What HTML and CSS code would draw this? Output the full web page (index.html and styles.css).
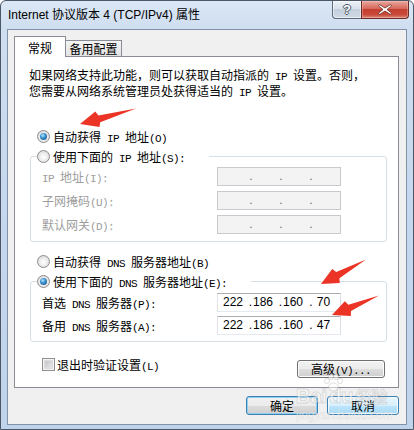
FILE: index.html
```html
<!DOCTYPE html>
<html lang="zh-CN">
<head>
    <meta charset="UTF-8">
    <meta name="viewport" content="width=device-width, initial-scale=1.0">
    <title>Internet 协议版本 4 (TCP/IPv4) 属性</title>
    <link rel="stylesheet" href="styles.css">
</head>
<body>
    <div class="window">
        <div class="titlebar">
            <div class="title">Internet 协议版本 4 (TCP/IPv4) 属性</div>
            <div class="caption-btns">
                <div class="cbtn help">?</div>
                <div class="cbtn close">
                    <svg width="14" height="11" viewBox="0 0 14 11">
                        <path d="M1.5 0.5 L7 4 L12.5 0.5 L13.5 2 L9 5.5 L13.5 9 L12.5 10.5 L7 7 L1.5 10.5 L0.5 9 L5 5.5 L0.5 2 Z" fill="#fff" stroke="#6b2a22" stroke-width="0.8"/>
                    </svg>
                </div>
            </div>
        </div>

        <div class="client">
            <div class="tabs">
                <div class="tab active">常规</div>
                <div class="tab">备用配置</div>
            </div>

            <div class="panel">
                <p class="desc">如果网络支持此功能，则可以获取自动指派的<span class="en"> IP </span>设置。否则，<br>您需要从网络系统管理员处获得适当的<span class="en"> IP </span>设置。</p>

                <div class="opt first">
                    <span class="radio on"></span>
                    <span>自动获得<span class="en"> IP </span>地址<span class="en">(O)</span></span>
                </div>

                <fieldset class="group">
                    <legend>
                        <span class="opt">
                            <span class="radio"></span>
                            <span>使用下面的<span class="en"> IP </span>地址<span class="en">(S):</span></span>
                        </span>
                    </legend>
                    <div class="rows">
                        <div class="field-row disabled">
                            <span><span class="en">IP </span>地址<span class="en">(I):</span></span>
                            <div class="ip off">
                                <span class="cell"><span class="num"></span></span>
                                <span class="cell"><span class="dot">.</span><span class="num"></span></span>
                                <span class="cell"><span class="dot">.</span><span class="num"></span></span>
                                <span class="cell"><span class="dot">.</span><span class="num"></span></span>
                            </div>
                        </div>
                        <div class="field-row disabled">
                            <span>子网掩码<span class="en">(U):</span></span>
                            <div class="ip off">
                                <span class="cell"><span class="num"></span></span>
                                <span class="cell"><span class="dot">.</span><span class="num"></span></span>
                                <span class="cell"><span class="dot">.</span><span class="num"></span></span>
                                <span class="cell"><span class="dot">.</span><span class="num"></span></span>
                            </div>
                        </div>
                        <div class="field-row disabled">
                            <span>默认网关<span class="en">(D):</span></span>
                            <div class="ip off">
                                <span class="cell"><span class="num"></span></span>
                                <span class="cell"><span class="dot">.</span><span class="num"></span></span>
                                <span class="cell"><span class="dot">.</span><span class="num"></span></span>
                                <span class="cell"><span class="dot">.</span><span class="num"></span></span>
                            </div>
                        </div>
                    </div>
                </fieldset>

                <div class="opt dns-auto">
                    <span class="radio"></span>
                    <span>自动获得<span class="en"> DNS </span>服务器地址<span class="en">(B)</span></span>
                </div>

                <fieldset class="group dns">
                    <legend>
                        <span class="opt">
                            <span class="radio on"></span>
                            <span>使用下面的<span class="en"> DNS </span>服务器地址<span class="en">(E):</span></span>
                        </span>
                    </legend>
                    <div class="rows">
                        <div class="field-row">
                            <span>首选<span class="en"> DNS </span>服务器<span class="en">(P):</span></span>
                            <div class="ip">
                                <span class="cell"><span class="num">222</span></span>
                                <span class="cell"><span class="dot">.</span><span class="num">186</span></span>
                                <span class="cell"><span class="dot">.</span><span class="num">160</span></span>
                                <span class="cell"><span class="dot">.</span><span class="num">70</span></span>
                            </div>
                        </div>
                        <div class="field-row">
                            <span>备用<span class="en"> DNS </span>服务器<span class="en">(A):</span></span>
                            <div class="ip">
                                <span class="cell"><span class="num">222</span></span>
                                <span class="cell"><span class="dot">.</span><span class="num">186</span></span>
                                <span class="cell"><span class="dot">.</span><span class="num">160</span></span>
                                <span class="cell"><span class="dot">.</span><span class="num">47</span></span>
                            </div>
                        </div>
                    </div>
                </fieldset>

                <div class="bottom-row">
                    <label class="checkline">
                        <span class="check"></span>
                        <span>退出时验证设置<span class="en">(L)</span></span>
                    </label>
                    <button class="btn advanced">高级<span class="en">(V)...</span></button>
                </div>
            </div>

            <div class="dialog-btns">
                <button class="btn ok">确定</button>
                <button class="btn cancel">取消</button>
            </div>
        </div>
    </div>

    <svg class="arrows" width="414" height="430" viewBox="0 0 414 430">
        <polygon points="80,124 95.3,111.6 98.4,115.4 136,108.5 100.2,122.2 99.5,127" fill="#ec3426"/>
        <polygon points="321,284 332.2,268.9 336.2,272 366,259.5 339.4,278.2 339.8,283.1" fill="#ec3426"/>
        <polygon points="332,315 344.8,301.2 348.4,304.7 379,295.5 351,311.1 350.8,316" fill="#ec3426"/>
    </svg>

    <div class="watermark">
        <div class="wm-logo">
            <span>Bai</span>
            <svg width="20" height="18" viewBox="0 0 20 18">
                <circle cx="4" cy="7" r="2.5"/>
                <circle cx="8" cy="3" r="2.5"/>
                <circle cx="13" cy="3" r="2.5"/>
                <circle cx="17" cy="7" r="2.5"/>
                <ellipse cx="10.5" cy="13" rx="5" ry="4"/>
            </svg>
            <span>du</span>
            <span class="wm-cn">经验</span>
        </div>
        <div class="wm-url">jingyan.baidu.com</div>
    </div>
</body>
</html>
```

FILE: styles.css
```css
body {
    margin: 0;
    background-color: #fff;
    font-family: "Noto Sans CJK SC", sans-serif;
    font-size: 12px;
    color: #000;
}
.en {
    font-family: "Liberation Mono", "Noto Sans CJK SC", monospace;
    font-size: 11px;
    letter-spacing: -0.6px;
}
.window {
    width: 414px;
    height: 430px;
    box-sizing: border-box;
    border: 1px solid #4b5666;
    border-radius: 6px 6px 0 0;
    padding: 0 6px 4px 6px;
    background: linear-gradient(180deg, #dbe7f5 0px, #cfdef0 28px, #c6d8ee 200px, #bfd3eb 100%);
    display: flex;
    flex-direction: column;
}
.titlebar {
    height: 28px;
    display: flex;
    justify-content: space-between;
    align-items: flex-start;
    margin: 0 -6px;
    padding-left: 7px;
}
.title {
    font-family: "Liberation Sans", "Noto Sans CJK SC", sans-serif;
    font-size: 12px;
    line-height: 15px;
    margin-top: 7px;
}
.caption-btns {
    display: flex;
    margin-right: 4px;
}
.cbtn {
    height: 18px;
    box-sizing: border-box;
    display: flex;
    align-items: center;
    justify-content: center;
}
.help {
    width: 29px;
    border: 1px solid #5f6c7d;
    border-top: none;
    border-right: none;
    border-radius: 0 0 0 4px;
    background: linear-gradient(180deg, #edf2f8 0%, #d9e1ec 45%, #c4cfdd 50%, #cfd9e6 100%);
    box-shadow: inset 0 0 0 1px rgba(255, 255, 255, 0.5);
    font-family: "Liberation Sans", sans-serif;
    font-weight: bold;
    font-size: 13px;
    color: #fff;
    text-shadow: 1px 0 #4a5564, -1px 0 #4a5564, 0 1px #4a5564, 0 -1px #4a5564;
}
.close {
    width: 48px;
    border: 1px solid #6a2b24;
    border-top: none;
    border-radius: 0 0 4px 0;
    background: linear-gradient(180deg, #e8a79d 0%, #d6685b 45%, #c43f2f 50%, #c84a39 80%, #dc8b7c 100%);
    box-shadow: inset 0 0 0 1px rgba(255, 220, 210, 0.35);
}
.client {
    height: 396px;
    box-sizing: border-box;
    border: 1px solid #8192a8;
    background-color: #f0f0f0;
    padding: 6px 7px 0 6px;
}
.tabs {
    height: 20px;
    display: flex;
    align-items: flex-end;
}
.tab {
    box-sizing: border-box;
    border: 1px solid #898c95;
    border-bottom: none;
    text-align: center;
}
.tab.active {
    position: relative;
    z-index: 1;
    width: 52px;
    height: 21px;
    margin-bottom: -1px;
    background-color: #fff;
    padding-top: 3px;
    line-height: 16px;
}
.tab:not(.active) {
    width: 56px;
    height: 16px;
    border-left: none;
    background: linear-gradient(180deg, #f4f4f4, #e3e3e3);
    line-height: 15px;
}
.panel {
    height: 332px;
    box-sizing: border-box;
    border: 1px solid #898c95;
    background-color: #fff;
}
.desc {
    margin: 11px 0 0 14px;
    line-height: 14px;
    white-space: nowrap;
}
.opt {
    display: flex;
    align-items: center;
    gap: 3px;
    height: 20px;
    white-space: nowrap;
}
.opt.first {
    margin: 26px 0 0 22px;
}
.opt.dns-auto {
    margin: 9px 0 0 22px;
}
.radio {
    width: 13px;
    height: 13px;
    box-sizing: border-box;
    border-radius: 50%;
    border: 1px solid #8d8d8d;
    background: radial-gradient(circle at 50% 55%, #ffffff 0, #f2f2f2 35%, #cfcfcf 100%);
    display: flex;
    align-items: center;
    justify-content: center;
    flex: none;
}
.radio.on::after {
    content: "";
    width: 7px;
    height: 7px;
    border-radius: 50%;
    background: radial-gradient(circle at 40% 35%, #b4e6ff 0, #3b93cf 40%, #0d4675 100%);
}
.group {
    margin: 0 11px 0 15px;
    padding: 0 0 7px 6px;
    border: 1px solid #d5dfe5;
    border-radius: 3px;
    min-width: 0;
}
.group legend {
    padding: 0 24px 0 0;
}
.group .rows {
    margin: 1px 0 0 5px;
    display: flex;
    flex-direction: column;
    gap: 5px;
}
.group.dns {
    padding-bottom: 6px;
}
.group.dns .rows {
    margin-top: 2px;
    gap: 4px;
}
.field-row {
    display: grid;
    grid-template-columns: 175px 124px;
    align-items: center;
    height: 19px;
    white-space: nowrap;
}
.field-row.disabled {
    color: #9d9d9d;
}
.ip {
    height: 19px;
    box-sizing: border-box;
    border: 1px solid;
    border-color: #abadb3 #dbdfe6 #e3e9ef #e2e3ea;
    background-color: #fff;
    display: flex;
    font-family: "Liberation Sans", sans-serif;
    font-size: 12px;
    line-height: 17px;
    color: #000;
}
.ip.off {
    border-color: #c8cacd;
    background-color: #f3f3f3;
    color: #6d6d6d;
}
.cell {
    width: 30px;
    display: flex;
}
.dot {
    width: 6px;
    text-align: center;
}
.num {
    flex: 1;
    text-align: center;
    padding-right: 5px;
}
.cell:first-child .num {
    padding-right: 0;
}
.bottom-row {
    margin: 18px 13px 0 27px;
    height: 18px;
    display: flex;
    justify-content: space-between;
    align-items: flex-start;
}
.checkline {
    display: flex;
    align-items: center;
    gap: 2px;
    height: 13px;
    margin-top: -2px;
    white-space: nowrap;
}
.check {
    width: 13px;
    height: 13px;
    box-sizing: border-box;
    border: 1px solid #8e8f8f;
    background: linear-gradient(135deg, #b9bcc0, #f1f1f1);
    box-shadow: inset 0 0 0 1px #f4f4f4, inset 0 0 0 2px #dcdcdc;
}
.btn {
    box-sizing: border-box;
    border: 1px solid #707070;
    border-radius: 3px;
    background: linear-gradient(180deg, #f2f2f2 0%, #ebebeb 50%, #dddddd 51%, #cfcfcf 100%);
    box-shadow: inset 0 0 0 1px #fbfbfb;
    font-family: "Noto Sans CJK SC", sans-serif;
    font-size: 12px;
    color: #000;
    padding: 0;
    margin: 0;
    line-height: 16px;
    cursor: pointer;
}
.advanced {
    width: 88px;
    height: 18px;
}
.dialog-btns {
    margin-top: 8px;
    display: flex;
    justify-content: flex-end;
    gap: 9px;
}
.ok, .cancel {
    width: 72px;
    height: 19px;
    line-height: 17px;
}
.ok {
    border-color: #3c7fb1;
    box-shadow: inset 0 0 0 1px #8ed0f2;
}
.cancel {
    border-color: #3c7fb1;
    background: linear-gradient(180deg, #eaf6fd 0%, #d9f0fc 50%, #bee6fd 51%, #a7d9f5 100%);
    box-shadow: inset 0 0 0 1px #f2fafe;
}
.arrows {
    position: absolute;
    left: 0;
    top: 0;
    pointer-events: none;
}
.watermark {
    position: absolute;
    left: 296px;
    top: 374px;
    pointer-events: none;
    color: rgba(255, 255, 255, 0.55);
}
.wm-logo {
    display: flex;
    align-items: flex-end;
    font-family: "Liberation Sans", sans-serif;
    font-weight: bold;
    font-size: 20px;
    line-height: 20px;
    -webkit-text-stroke: 1px rgba(150, 150, 150, 0.3);
}
.wm-logo svg {
    fill: rgba(255, 255, 255, 0.5);
    stroke: rgba(150, 150, 150, 0.3);
    margin: 0 -14px 14px -4px;
}
.wm-cn {
    font-family: "Noto Sans CJK SC", sans-serif;
    font-size: 16px;
    margin-left: 2px;
}
.wm-url {
    font-family: "Liberation Sans", sans-serif;
    font-size: 12px;
    margin-top: 2px;
    color: rgba(255, 255, 255, 0.6);
    -webkit-text-stroke: 0.5px rgba(150, 150, 150, 0.25);
}
```
